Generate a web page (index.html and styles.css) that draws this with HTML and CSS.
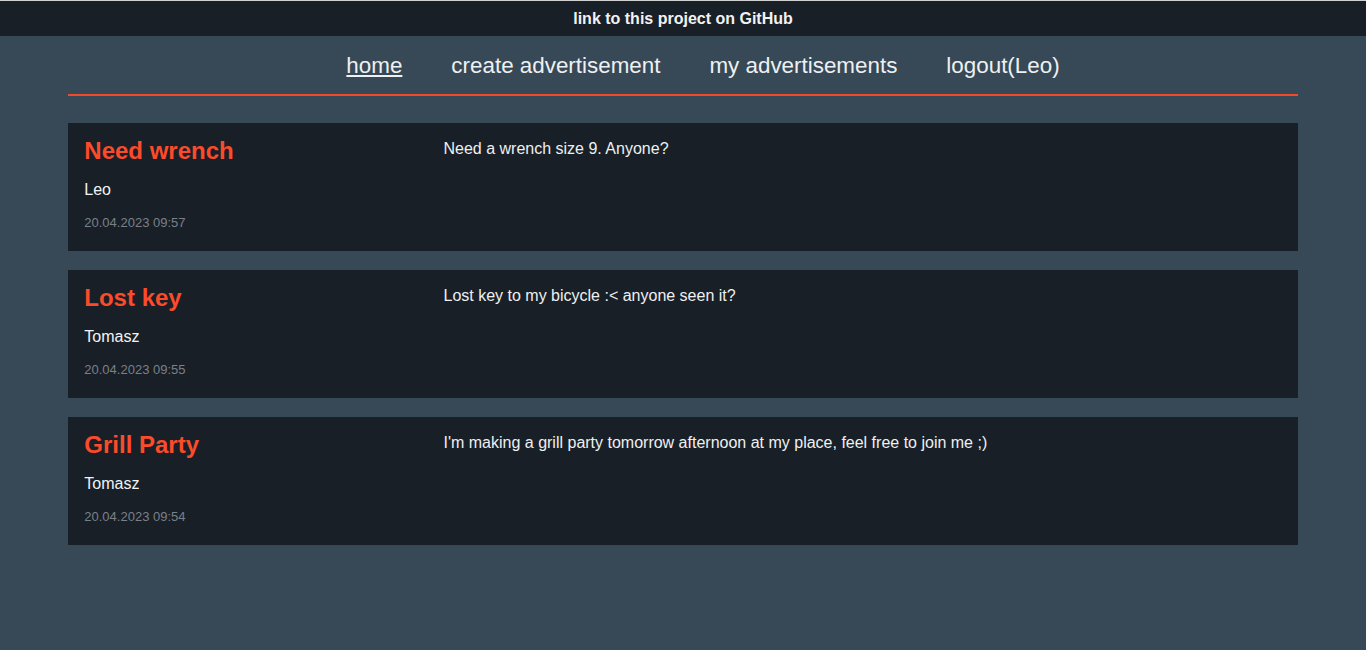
FILE: index.html
```html
<!DOCTYPE html>
<html lang="en">
<head>
<meta charset="utf-8">
<title>Advertisements</title>
<link rel="stylesheet" href="styles.css">
</head>
<body>
<header class="topbar">
  <a class="gh-link" href="#">link to this project on GitHub</a>
</header>
<div class="container">
  <nav class="nav">
    <ul class="nav-list">
      <li><a class="nav-link active" href="#">home</a></li>
      <li><a class="nav-link" href="#">create advertisement</a></li>
      <li><a class="nav-link" href="#">my advertisements</a></li>
      <li><a class="nav-link" href="#">logout(Leo)</a></li>
    </ul>
  </nav>
  <main class="ads">
    <article class="ad">
      <div class="ad-meta">
        <h2 class="ad-title">Need wrench</h2>
        <div class="ad-author">Leo</div>
        <div class="ad-date">20.04.2023 09:57</div>
      </div>
      <p class="ad-desc">Need a wrench size 9. Anyone?</p>
    </article>
    <article class="ad">
      <div class="ad-meta">
        <h2 class="ad-title">Lost key</h2>
        <div class="ad-author">Tomasz</div>
        <div class="ad-date">20.04.2023 09:55</div>
      </div>
      <p class="ad-desc">Lost key to my bicycle :&lt; anyone seen it?</p>
    </article>
    <article class="ad">
      <div class="ad-meta">
        <h2 class="ad-title">Grill Party</h2>
        <div class="ad-author">Tomasz</div>
        <div class="ad-date">20.04.2023 09:54</div>
      </div>
      <p class="ad-desc">I'm making a grill party tomorrow afternoon at my place, feel free to join me ;)</p>
    </article>
  </main>
</div>
</body>
</html>
```
FILE: styles.css
```css
html, body {
  margin: 0;
  padding: 0;
}
body {
  background: #374956;
  font-family: "Liberation Sans", Arial, sans-serif;
  color: #eef0f2;
  min-height: 650px;
}
.topbar {
  border-top: 1px solid #d0d0d0;
  background: #181f27;
  height: 35px;
  display: flex;
  align-items: center;
  justify-content: center;
}
.gh-link {
  color: #f2f2f2;
  font-weight: bold;
  font-size: 16px;
  line-height: 18px;
  text-decoration: none;
}
.container {
  width: 90%;
  margin: 0 auto;
}
.nav {
  padding: 17px 0 15px;
  border-bottom: 2px solid #f04a2a;
}
.nav-list {
  list-style: none;
  margin: 0;
  padding: 0 0 0 40px;
  display: flex;
  justify-content: center;
  gap: 49px;
}
.nav-link {
  color: #eef0f2;
  font-size: 22.4px;
  line-height: 26px;
  text-decoration: none;
}
.nav-link.active {
  text-decoration: underline;
}
.ads {
  margin-top: 27px;
  display: flex;
  flex-direction: column;
  gap: 19px;
}
.ad {
  background: #181f27;
  padding: 14px 16px 21px;
  display: flex;
}
.ad-meta {
  flex: 0 0 30%;
}
.ad-title {
  margin: 0;
  color: #fb4b2a;
  font-size: 24px;
  line-height: 28px;
  font-weight: bold;
}
.ad-author {
  margin-top: 16px;
  font-size: 16px;
  line-height: 18px;
  color: #f2f3f5;
}
.ad-date {
  margin-top: 16px;
  font-size: 13px;
  line-height: 15px;
  color: #7b8087;
}
.ad-desc {
  margin: 3px 0 0;
  font-size: 16px;
  line-height: 18px;
  color: #eef0f2;
}
```
